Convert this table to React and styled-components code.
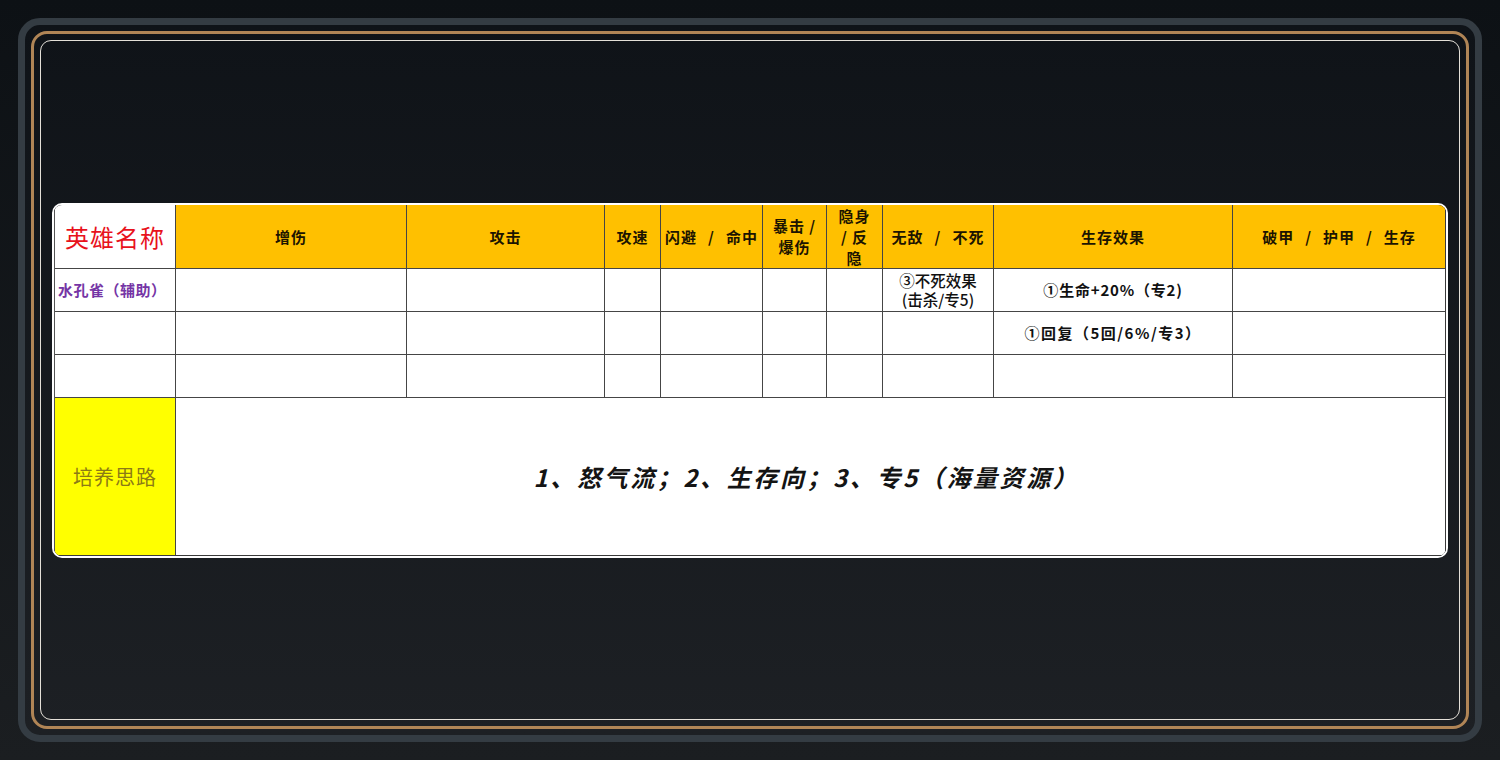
import React from "react";
import styled, { createGlobalStyle } from "styled-components";

const Global = createGlobalStyle`
  html, body { margin: 0; padding: 0; }
  body {
    width: 1500px; height: 760px; overflow: hidden;
    background: linear-gradient(180deg, #0d1115 0%, #1b1e21 100%);
    font-family: "Noto Sans CJK SC", "Noto Sans", sans-serif;
  }
`;

const Page = styled.div`
  box-sizing: border-box;
  width: 1500px;
  height: 760px;
  padding: 18px;
`;

const Outer = styled.div`
  box-sizing: border-box;
  height: 100%;
  border: 7px solid #343c43;
  border-radius: 22px;
  padding: 6px;
  background: linear-gradient(180deg, #0f1318 0%, #1d2024 100%);
`;

const GoldFrame = styled.div`
  box-sizing: border-box;
  height: 100%;
  border: 3px solid #b08556;
  border-radius: 16px;
  padding: 6px;
`;

const Inner = styled.div`
  box-sizing: border-box;
  height: 100%;
  border: 1px solid #e4e0d8;
  border-radius: 11px;
  display: flex;
  align-items: center;
  justify-content: center;
`;

const Card = styled.div`
  box-sizing: border-box;
  width: 1396px;
  height: 355px;
  border: 2px solid #ffffff;
  border-radius: 10px;
  overflow: hidden;
  background: #ffffff;
`;

const Grid = styled.div`
  display: grid;
  grid-template-columns: 120px 230px 197px 55px 101px 63px 55px 110px 238px 1fr;
  grid-template-rows: 63px 42px 42px 42px 1fr;
  gap: 1px;
  height: 100%;
  background: #454545;
  border: 1px solid #3a3a3a;
  border-top: none;
  border-left-color: #555555;
  box-sizing: border-box;
`;

const Cell = styled.div`
  background: ${(p) => p.$bg || "#ffffff"};
  display: flex;
  align-items: center;
  justify-content: ${(p) => p.$align || "center"};
  text-align: center;
  grid-column: ${(p) => p.$span || "auto"};
  padding: ${(p) => p.$pad || "0"};
  min-width: 0;
  overflow: hidden;
`;

const HeadText = styled.span`
  font-size: 15px;
  font-weight: 700;
  color: #1c1400;
  letter-spacing: 1px;
  line-height: 21px;
`;

const Sep = styled.span`
  margin: 0 11px;
`;

const HeroTitle = styled.span`
  font-size: 24px;
  color: #e8121c;
  letter-spacing: 1px;
`;

const HeroName = styled.span`
  font-size: 15px;
  font-weight: 700;
  color: #7535a5;
  letter-spacing: 0.5px;
`;

const BodyText = styled.span`
  font-size: ${(p) => p.$size || "15px"};
  font-weight: ${(p) => p.$weight || 500};
  color: #111111;
  line-height: ${(p) => p.$lh || "18px"};
  letter-spacing: ${(p) => p.$ls || "0"};
`;

const PlanLabel = styled.span`
  font-size: 20px;
  color: #8b7a16;
  letter-spacing: 1px;
`;

const PlanText = styled.span`
  font-size: 24px;
  font-weight: 700;
  font-style: italic;
  color: #141414;
  letter-spacing: 2.6px;
  margin-right: 8px;
`;

const headers = [
  { key: "a", content: "增伤" },
  { key: "b", content: "攻击" },
  { key: "c", content: "攻速" },
  { key: "d", content: <>闪避<Sep>/</Sep>命中</> },
  { key: "e", content: <>暴击 /<br />爆伤</> },
  { key: "f", content: <>隐身<br />/ 反<br />隐</> },
  { key: "g", content: <>无敌<Sep>/</Sep>不死</> },
  { key: "h", content: "生存效果" },
  { key: "i", content: <>破甲<Sep>/</Sep>护甲<Sep>/</Sep>生存</> },
];

const rows = [
  {
    name: "水孔雀（辅助）",
    cells: {
      6: <BodyText $size="15.5px" $lh="19px">③不死效果<br />(击杀/专5)</BodyText>,
      7: <BodyText $weight={700} $ls="0.8px">①生命+20%（专2)</BodyText>,
    },
  },
  {
    name: "",
    cells: { 7: <BodyText $weight={700} $ls="1.5px">①回复（5回/6%/专3）</BodyText> },
  },
  { name: "", cells: {} },
];

export default function App() {
  return (
    <>
      <Global />
      <Page>
        <Outer>
          <GoldFrame>
            <Inner>
              <Card>
                <Grid>
                  <Cell>
                    <HeroTitle>英雄名称</HeroTitle>
                  </Cell>
                  {headers.map((h) => (
                    <Cell key={h.key} $bg="#ffc000">
                      <HeadText>{h.content}</HeadText>
                    </Cell>
                  ))}
                  {rows.map((r, ri) => (
                    <React.Fragment key={ri}>
                      <Cell $align="flex-start" $pad="0 0 0 3px">
                        <HeroName>{r.name}</HeroName>
                      </Cell>
                      {headers.map((h, ci) => (
                        <Cell key={h.key}>{r.cells[ci] || null}</Cell>
                      ))}
                    </React.Fragment>
                  ))}
                  <Cell $bg="#ffff00">
                    <PlanLabel>培养思路</PlanLabel>
                  </Cell>
                  <Cell $span="2 / -1">
                    <PlanText>1、怒气流；2、生存向；3、专5（海量资源）</PlanText>
                  </Cell>
                </Grid>
              </Card>
            </Inner>
          </GoldFrame>
        </Outer>
      </Page>
    </>
  );
}
